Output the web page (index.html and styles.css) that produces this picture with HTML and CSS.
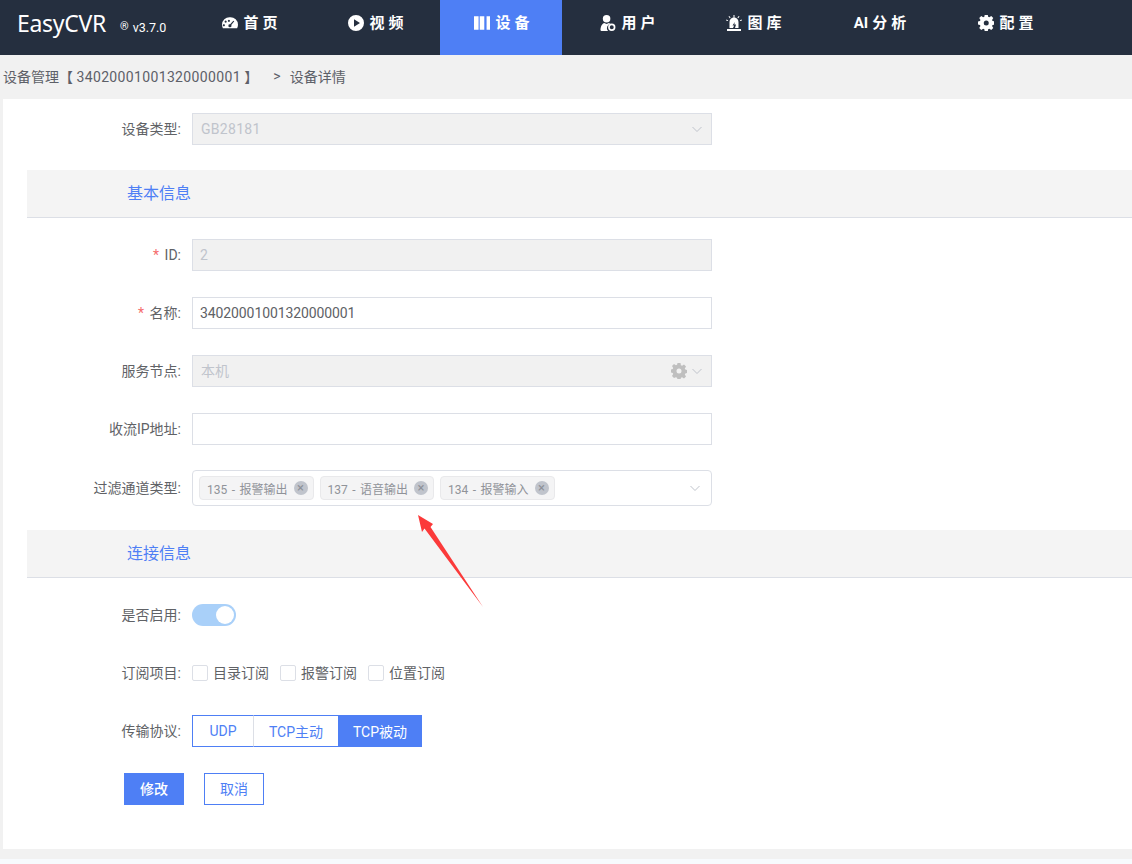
FILE: index.html
```html
<!DOCTYPE html>
<html lang="zh-CN">
<head>
  <meta charset="UTF-8">
  <meta name="viewport" content="width=device-width, initial-scale=1.0">
  <title>EasyCVR</title>
  <link rel="stylesheet" href="styles.css">
</head>
<body>
  <header class="topbar">
    <div class="logo">
      <span class="logo-name">EasyCVR</span>
      <span class="logo-reg">®</span>
      <span class="logo-version">v3.7.0</span>
    </div>
    <nav class="nav">
      <a class="nav-item">
        <svg class="nav-icon" viewBox="0 0 18 16"><path fill="#fff" fill-rule="evenodd" d="M9 1.500a8.500 8.500 0 0 0-9 8.600c0 1.500.4 2.800 1 3.900h16c.6-1.100 1-2.400 1-3.900a8.500 8.500 0 0 0-9-8.600zM3.300 10.500a1.200 1.200 0 1 1 0-.01zM5.300 6.500a1.200 1.200 0 1 1 0-.01zM9 5.600a1.200 1.200 0 1 1 0-.01zM13.800 6l-3.400 4.300a1.700 1.700 0 1 1-1.200-.9l3.600-4z"/></svg>
        <span class="nav-text">首页</span>
      </a>
      <a class="nav-item">
        <svg class="nav-icon" viewBox="0 0 16 16"><path fill="#fff" fill-rule="evenodd" d="M8 0a8 8 0 1 0 0 16A8 8 0 0 0 8 0zM6 4.300l6 3.700-6 3.700z"/></svg>
        <span class="nav-text">视频</span>
      </a>
      <a class="nav-item active">
        <svg class="nav-icon" viewBox="0 0 14 14"><path fill="#fff" d="M0 1h4v12H0zM5 1h4v12H5zM11 1h3v12h-3z"/></svg>
        <span class="nav-text">设备</span>
      </a>
      <a class="nav-item">
        <svg class="nav-icon" viewBox="0 0 16 17"><circle fill="#fff" cx="6.500" cy="4" r="4"/><path fill="#fff" d="M1 17c-.8 0-1-.5-1-1 0-4 2-7 4-7.500l2.500 1 2.500-1c.6.200 1.200.6 1.700 1A4.500 4.500 0 0 0 8 17z"/><circle cx="12" cy="13" r="3" fill="none" stroke="#fff" stroke-width="1.800"/></svg>
        <span class="nav-text">用户</span>
      </a>
      <a class="nav-item">
        <svg class="nav-icon" viewBox="0 0 16 16"><path fill="#fff" d="M3.500 7a4.500 4.500 0 0 1 9 0v6H9l1-3.500H8.300L8.800 7 6.500 10.500h1.700L7 13H3.500zM1 14h14v2H1zM7.500 0h1v2.500h-1zM2.500 1.500l.8-.6L4.600 2.700l-.8.6zM13.500 1.500l-.8-.6-1.300 1.800.8.6zM0 5.500l.3-.9 1.900.6-.3.900zM16 5.500l-.3-.9-1.900.6.300.9z"/></svg>
        <span class="nav-text">图库</span>
      </a>
      <a class="nav-item">
        <span class="nav-text"><span class="nav-latin">AI</span>分析</span>
      </a>
      <a class="nav-item">
        <svg class="nav-icon" viewBox="0 0 16 16"><path fill="#fff" fill-rule="evenodd" d="M6.500 0h3l.4 2.200 1.200.5L13 1.500l2 2-1.200 1.900.5 1.200 2.200.4v3l-2.200.4-.5 1.200 1.200 1.900-2 2-1.900-1.200-1.200.5-.4 2.200h-3l-.4-2.200-1.200-.5L3 15.500l-2-2 1.200-1.900-.5-1.200L-.5 10V7l2.200-.4.500-1.200L1 3.500l2-2 1.900 1.200 1.200-.5zM8 6a2.500 2.500 0 1 0 0 5 2.500 2.500 0 0 0 0-5z" transform="translate(.25 -.5)"/></svg>
        <span class="nav-text">配置</span>
      </a>
    </nav>
  </header>

  <div class="breadcrumb">
    <span>设备管理【 <span class="crumb-id">34020001001320000001</span> 】</span>
    <span class="crumb-sep">&gt;</span>
    <span>设备详情</span>
  </div>

  <main class="card">
    <form class="form">
      <div class="row row-first">
        <label class="row-label">设备类型:</label>
        <div class="input disabled select">
          <span class="input-code">GB28181</span>
          <svg class="chevron" viewBox="0 0 12 12"><path d="M1.500 4l4.500 4.500L10.500 4"/></svg>
        </div>
      </div>

      <div class="section">基本信息</div>

      <div class="row">
        <label class="row-label row-label-latin"><i class="req">*</i> ID:</label>
        <div class="input disabled plain">2</div>
      </div>
      <div class="row">
        <label class="row-label"><i class="req">*</i> 名称:</label>
        <div class="input">34020001001320000001</div>
      </div>
      <div class="row">
        <label class="row-label">服务节点:</label>
        <div class="input disabled select">
          <span class="cjk-value">本机</span>
          <span class="select-icons">
            <svg class="gear" viewBox="0 0 16 16"><path fill="#bfbfbf" fill-rule="evenodd" d="M6.500 0h3l.4 2.200 1.200.5L13 1.500l2 2-1.200 1.900.5 1.200 2.200.4v3l-2.200.4-.5 1.200 1.200 1.900-2 2-1.900-1.200-1.200.5-.4 2.200h-3l-.4-2.200-1.200-.5L3 15l-2-2 1.200-1.900-.5-1.200L-.5 9.500v-3l2.200-.4.500-1.200L1 3l2-2 1.900 1.200 1.200-.5zM8 5.500a2.500 2.500 0 1 0 0 5 2.500 2.500 0 0 0 0-5z"/></svg>
            <svg class="chevron" viewBox="0 0 12 12"><path d="M1.500 4l4.500 4.500L10.500 4"/></svg>
          </span>
        </div>
      </div>
      <div class="row">
        <label class="row-label">收流IP地址:</label>
        <div class="input"></div>
      </div>
      <div class="row row-tags">
        <label class="row-label">过滤通道类型:</label>
        <div class="input tags-input">
          <span class="tag">135 - 报警输出<i class="tag-close">×</i></span>
          <span class="tag">137 - 语音输出<i class="tag-close">×</i></span>
          <span class="tag">134 - 报警输入<i class="tag-close">×</i></span>
          <svg class="chevron" viewBox="0 0 12 12"><path d="M1.500 4l4.500 4.500L10.500 4"/></svg>
        </div>
      </div>

      <div class="section">连接信息</div>

      <div class="row">
        <label class="row-label">是否启用:</label>
        <span class="switch"><i class="switch-knob"></i></span>
      </div>
      <div class="row">
        <label class="row-label">订阅项目:</label>
        <div class="checks">
          <span class="check"><i class="check-box"></i><span class="check-text">目录订阅</span></span>
          <span class="check"><i class="check-box"></i><span class="check-text">报警订阅</span></span>
          <span class="check"><i class="check-box"></i><span class="check-text">位置订阅</span></span>
        </div>
      </div>
      <div class="row">
        <label class="row-label">传输协议:</label>
        <div class="radio-group">
          <span class="radio radio-udp">UDP</span>
          <span class="radio">TCP主动</span>
          <span class="radio on">TCP被动</span>
        </div>
      </div>
      <div class="actions">
        <button type="button" class="btn btn-primary">修改</button>
        <button type="button" class="btn">取消</button>
      </div>
    </form>
  </main>
  <div class="foot"></div>

  <!-- red annotation arrow pasted over the screenshot -->
  <svg class="arrow" viewBox="0 0 70 96"><path fill="#fb3a3a" d="M2 1l15 9-2.500 3L67 93 8.500 14.500 6 18z"/></svg>
</body>
</html>
```

FILE: styles.css
```css
* {
  box-sizing: border-box;
}

body {
  font-family: Roboto, "Noto Sans CJK SC", sans-serif;
  font-size: 14px;
  margin: 0;
  height: 864px;
  overflow: hidden;
  background-color: #f1f1f1;
  color: #606266;
  position: relative;
}

.topbar {
  display: flex;
  height: 55px;
  background-color: #252f3f;
  color: #fff;
}

.logo {
  width: 188px;
  padding-left: 17px;
  display: flex;
  align-items: baseline;
  line-height: 46px;
}

.logo-name {
  font-family: "Noto Sans", sans-serif;
  font-size: 23px;
  letter-spacing: -0.3px;
}

.logo-reg {
  font-size: 11px;
  margin-left: 14px;
  position: relative;
  top: -2px;
}

.logo-version {
  font-size: 12.5px;
  margin-left: 4px;
}

.nav {
  display: flex;
  gap: 4px;
}

.nav-item {
  width: 122px;
  display: flex;
  align-items: center;
  justify-content: center;
  gap: 5px;
  padding: 0 0 10px 2px;
  font-weight: 700;
}

.nav-item.active {
  background-color: #4e7ff5;
}

.nav-icon {
  width: 16px;
  height: 16px;
}

.nav-text {
  font-size: 15px;
  letter-spacing: 4px;
  line-height: 16px;
  margin-right: -4px;
}

.nav-latin {
  letter-spacing: 0;
  margin-right: 4px;
}

.breadcrumb {
  height: 44px;
  padding: 0 0 2px 3px;
  display: flex;
  align-items: center;
  color: #5d6068;
}

.crumb-id {
  letter-spacing: 0.35px;
}

.crumb-sep {
  margin: 0 9px 0 15px;
}

.card {
  height: 750px;
  margin-left: 3px;
  padding: 14px 0 0 24px;
  background-color: #fff;
}

.row {
  display: flex;
  align-items: center;
  height: 32px;
  margin-bottom: 26px;
}

.row-first {
  margin-bottom: 25px;
}

.row-tags {
  height: 36px;
  margin-top: -1px;
  margin-bottom: 24px;
}

.row-label {
  width: 154px;
  padding-bottom: 2px;
  text-align: right;
  margin-right: 11px;
  white-space: nowrap;
}

.row-label-latin {
  padding-bottom: 0;
}

.req {
  font-style: normal;
  margin-right: 2px;
  color: #f56c6c;
}

.input {
  width: 520px;
  height: 32px;
  padding: 0 7px;
  display: flex;
  align-items: center;
  background-color: #fff;
  border: 1px solid #dcdfe6;
  letter-spacing: -0.1px;
  color: #606266;
}

.input.disabled {
  background-color: #f1f1f1;
  color: #c0c4cc;
  padding: 0 8px;
}

.input.plain {
  padding: 0 7px;
}

.input-code {
  letter-spacing: 0.3px;
}

.cjk-value {
  padding-bottom: 2px;
}

.select {
  justify-content: space-between;
}

.select-icons {
  display: flex;
  align-items: center;
  gap: 4px;
}

.gear {
  width: 16px;
  height: 16px;
}

.chevron {
  width: 12px;
  height: 12px;
  fill: none;
  stroke: #c0c4cc;
  stroke-width: 1;
}

.section {
  height: 48px;
  margin-bottom: 21px;
  padding-left: 100px;
  font-size: 16px;
  line-height: 48px;
  background-color: #f4f4f4;
  border-bottom: 1px solid #dcdfe6;
  color: #4e7ff5;
}

.tags-input {
  height: 36px;
  padding: 0 6px;
  gap: 6px;
  border-radius: 4px;
  position: relative;
}

.tags-input .chevron {
  position: absolute;
  right: 10px;
  top: 11px;
}

.tag {
  height: 24px;
  padding: 0 5px 0 7px;
  display: flex;
  align-items: center;
  font-size: 12px;
  letter-spacing: 0;
  word-spacing: 1.500px;
  color: #909399;
  background-color: #f4f4f5;
  border: 1px solid #e9e9eb;
  border-radius: 4px;
}

.tag-close {
  width: 14px;
  height: 14px;
  margin-left: 6px;
  border-radius: 50%;
  background-color: #c0c4cc;
  color: #8d9199;
  font-style: normal;
  font-size: 13px;
  line-height: 14px;
  text-align: center;
}

.switch {
  width: 44px;
  height: 22px;
  padding: 2px;
  display: flex;
  justify-content: flex-end;
  border-radius: 11px;
  background-color: #a9d0f9;
}

.switch-knob {
  width: 18px;
  height: 18px;
  border-radius: 50%;
  background-color: #fff;
}

.checks {
  display: flex;
  gap: 11px;
}

.check {
  display: flex;
  align-items: center;
  gap: 5px;
}

.check-text {
  padding-bottom: 2px;
}

.check-box {
  width: 16px;
  height: 16px;
  margin-bottom: 1px;
  border: 1px solid #dcdfe6;
  border-radius: 2px;
}

.radio-group {
  display: flex;
  height: 32px;
  color: #4e7ff5;
}

.radio {
  display: flex;
  align-items: center;
  justify-content: center;
  width: 84px;
  padding-bottom: 1px;
  border: 1px solid #4e7ff5;
  border-left: 0;
  border-right: 0;
}

.radio-udp {
  width: 62px;
  border-left: 1px solid #4e7ff5;
  border-right: 1px solid #dcdfe6;
}

.radio.on {
  background-color: #4e7ff5;
  color: #fff;
}

.actions {
  display: flex;
  gap: 20px;
  padding-left: 97px;
}

.btn {
  width: 60px;
  height: 32px;
  padding: 0 0 2px;
  font-family: inherit;
  font-size: 14px;
  color: #4e7ff5;
  background-color: #fff;
  border: 1px solid #4e7ff5;
}

.btn-primary {
  color: #fff;
  font-weight: 500;
  background-color: #4e7ff5;
}

.foot {
  height: 5px;
  margin-top: 10px;
  background-color: #f7fafd;
}

.arrow {
  position: absolute;
  left: 416px;
  top: 514px;
  width: 70px;
  height: 96px;
}
```
